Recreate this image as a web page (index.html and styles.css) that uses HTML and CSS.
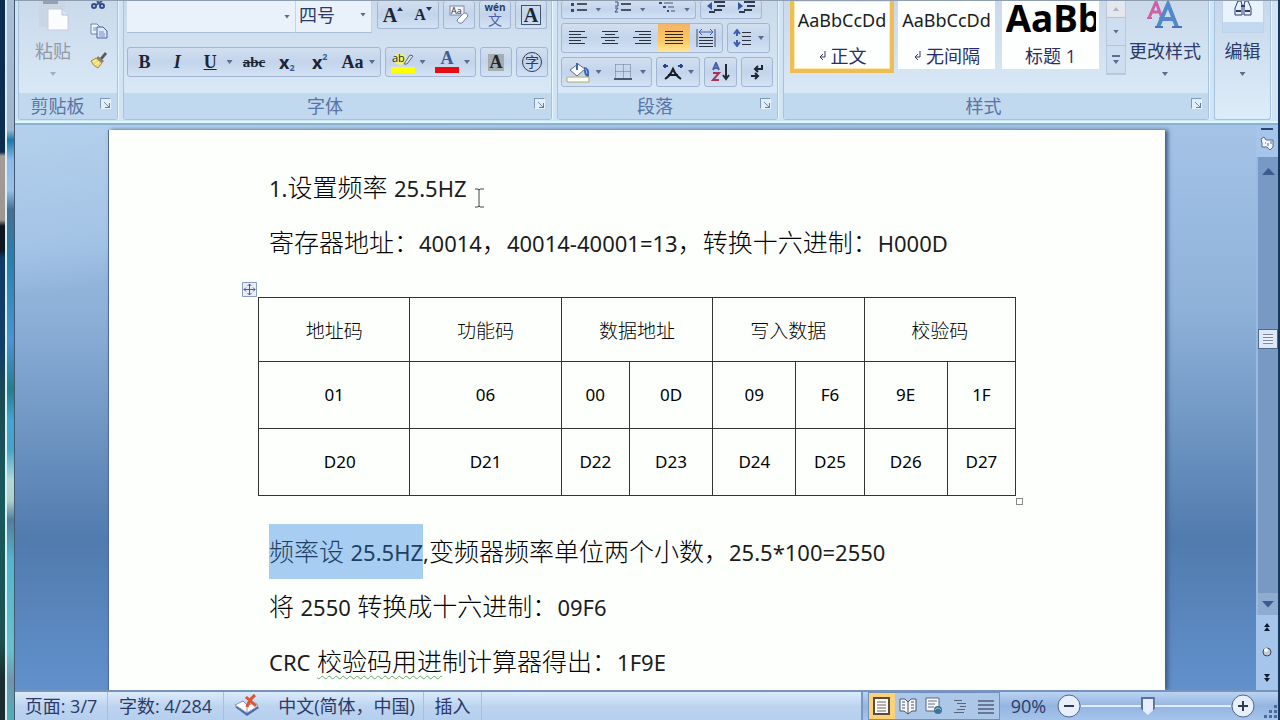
FILE: index.html
```html
<!DOCTYPE html>
<html lang="zh-CN">
<head>
<meta charset="utf-8">
<title>文档编辑</title>
<link rel="stylesheet" href="styles.css">
</head>
<body>
<div class="desktop-edge"></div>
<div class="window">
  <header class="ribbon">
    <section class="group clipboard">
      <div class="group-body clip-body">
        <button class="big paste" disabled>
          <svg class="paste-icon" width="32" height="30" viewBox="0 0 32 30"><path d="M2 0h26v26H2z" fill="#cbd6e5"/><path d="M6 0h15v3H6z" fill="#9a9fae"/><path d="M11 8h14l6 6v15H11z" fill="#fbfcfe" stroke="#c5cddb"/><path d="M25 8v6h6" fill="#dfe6f1" stroke="#b9c3d3"/></svg>
          <span>粘贴</span><i class="caret pale"></i>
        </button>
        <div class="clip-tools">
          <button class="tool cut" aria-label="剪切"><svg width="18" height="10" viewBox="0 0 18 10"><path d="M6 4l6-4M7 0l4 4" stroke="#405a96" stroke-width="2"/><circle cx="4" cy="5" r="2" fill="none" stroke="#354b8a" stroke-width="2"/><circle cx="12" cy="5" r="2" fill="none" stroke="#354b8a" stroke-width="2"/></svg></button>
          <button class="tool" aria-label="复制"><svg width="18" height="16" viewBox="0 0 18 16"><path d="M1 1h6l3 3v7H1z" fill="#eef4fd" stroke="#6c83b4"/><path d="M7 4h6l4 4v7H7z" fill="#dce8fa" stroke="#46609c"/><path d="M9 9h5M9 11h6M9 13h6M3 5h4M3 7h3" stroke="#7590c4"/></svg></button>
          <button class="tool" aria-label="格式刷"><svg width="18" height="18" viewBox="0 0 18 18"><path d="M10 7l5-6 2 2-5 6z" fill="#5b5568"/><path d="M8 5l6 5-2 2-6-4z" fill="#8c7f6a"/><path d="M6 7l6 5-4 5Q3 15 1 10z" fill="#f3dd72" stroke="#a08c48"/><path d="M3 11l3-2M5 14l4-3" stroke="#fff6bd"/></svg></button>
        </div>
      </div>
      <footer class="group-title"><span>剪贴板</span><button class="launcher" aria-label="剪贴板选项"></button></footer>
    </section>

    <section class="group font">
      <div class="group-body rows">
        <div class="row row-top">
          <div class="combo combo-font"><i class="caret"></i></div>
          <div class="combo combo-size"><span>四号</span><i class="caret"></i></div>
          <div class="bar bar-grow">
            <button class="serif grow" aria-label="增大字体">A<svg width="6" height="4" viewBox="0 0 6 4"><path d="M0 4l3-4 3 4z" fill="#26335c"/></svg></button>
            <button class="serif shrink" aria-label="缩小字体">A<svg width="6" height="4" viewBox="0 0 6 4"><path d="M0 0h6L3 4z" fill="#26335c"/></svg></button>
          </div>
          <div class="bar sq"><button aria-label="清除格式"><svg width="20" height="22" viewBox="0 0 20 22"><rect x="1" y="2" width="14" height="9" fill="#f2f6fc" stroke="#7d88a0"/><text x="2" y="10" font-size="9" class="svg-sans">Aa</text><path d="M8 16l7-7q3-1 4 3l-6 7q-4 1-5-3z" fill="#fff" stroke="#6e7ca3"/></svg></button></div>
          <div class="bar sq"><button class="pinyin" aria-label="拼音指南"><small>wén</small><b>文</b></button></div>
          <div class="bar sq"><button class="serif boxed">A</button></div>
        </div>
        <div class="row row-low">
          <div class="bar bar-style">
            <button class="serif w31">B</button><button class="serif w31 italic">I</button><button class="serif w31 under">U</button><i class="caret"></i>
            <button class="serif w31 strike">abc</button><button class="w31 sub">x<small>2</small></button><button class="w31 sup">x<small>2</small></button><button class="serif w31 case">Aa</button><i class="caret"></i>
          </div>
          <div class="bar bar-color">
            <button class="w31" aria-label="突出显示"><svg width="24" height="24" viewBox="0 0 24 24"><circle cx="9" cy="9" r="6" fill="#f3f06d"/><text x="1" y="12" font-size="11" class="svg-sans">ab</text><path d="M13 14l6-9 3 1-6 8z" fill="#dce4ef" stroke="#566580"/><path d="M0 17h24v6H0z" fill="#ffff00"/></svg></button><i class="caret"></i>
            <button class="w31" aria-label="字体颜色"><svg width="24" height="24" viewBox="0 0 24 24"><text x="12" y="14" font-size="18" font-weight="700" text-anchor="middle" class="svg-serif">A</text><path d="M0 17h24v6H0z" fill="#e80c12"/></svg></button><i class="caret"></i>
          </div>
          <div class="bar sq"><button class="serif shade">A</button></div>
          <div class="bar sq"><button class="circled">字</button></div>
        </div>
      </div>
      <footer class="group-title"><span>字体</span><button class="launcher" aria-label="字体选项"></button></footer>
    </section>

    <section class="group para">
      <div class="group-body para-rows">
        <div class="row cut-row">
          <div class="bar bar-lists">
            <button aria-label="项目符号"><svg width="18" height="14" viewBox="0 0 18 14"><path d="M1 3h3v3H1zM1 9h3v3H1z" fill="#3a4668"/><path d="M7 4h10M7 10h10" stroke="#4a5368" stroke-width="2"/></svg></button><i class="caret"></i>
            <button aria-label="编号"><svg width="18" height="14" viewBox="0 0 18 14"><path d="M1 2h3v4H1M1 8h3l-3 4h3" stroke="#3a4a80" fill="none"/><path d="M7 4h10M7 10h10" stroke="#4a5368" stroke-width="2"/></svg></button><i class="caret"></i>
            <button aria-label="多级列表"><svg width="18" height="14" viewBox="0 0 18 14"><path d="M1 3h3M5 7h3M9 11h2" stroke="#3a4a80" fill="none" stroke-width="2"/><path d="M6 3h9M10 7h6M13 11h4" stroke="#4a5368"/></svg></button><i class="caret"></i>
          </div>
          <div class="bar bar-indent">
            <button aria-label="减少缩进"><svg width="20" height="14" viewBox="0 0 20 14"><path d="M8 2h11M11 6h8M8 10h8M3 12h6" stroke="#333b50" stroke-width="2"/><path d="M6 2v8L1 6z" fill="#30549e"/></svg></button>
            <button aria-label="增加缩进"><svg width="20" height="14" viewBox="0 0 20 14"><path d="M8 2h11M11 6h8M8 10h8M3 12h6" stroke="#333b50" stroke-width="2"/><path d="M2 2v8l5-4z" fill="#30549e"/></svg></button>
          </div>
        </div>
        <div class="row">
          <div class="bar bar-align">
            <button aria-label="左对齐"><svg width="18" height="14" viewBox="0 0 18 14"><path d="M0 .5h16M0 3.500h12M0 6.500h18M0 9.500h12M0 12.500h16" stroke="#2c3240"/></svg></button>
            <button aria-label="居中"><svg width="18" height="14" viewBox="0 0 18 14"><path d="M1 .5h16M4 3.500h10M0 6.500h18M4 9.500h10M1 12.500h16" stroke="#2c3240"/></svg></button>
            <button aria-label="右对齐"><svg width="18" height="14" viewBox="0 0 18 14"><path d="M2 .5h16M6 3.500h12M0 6.500h18M6 9.500h12M2 12.500h16" stroke="#2c3240"/></svg></button>
            <button class="active" aria-label="两端对齐"><svg width="18" height="14" viewBox="0 0 18 14"><path d="M0 .5h18M0 3.500h18M0 6.500h18M0 9.500h18M0 12.500h18" stroke="#33291b"/></svg></button>
            <button aria-label="分散对齐"><svg width="20" height="18" viewBox="0 0 20 18"><path d="M1 0v18M19 0v18" stroke="#444e66"/><path d="M3 3h14M6 0L3 3l3 3M14 0l3 3-3 3" stroke="#4161b0" fill="none"/><path d="M3 8.500h14M3 11.500h14M3 14.500h14M3 17.500h14" stroke="#2c3240"/></svg></button>
          </div>
          <div class="bar bar-spacing"><button aria-label="行距"><svg width="20" height="18" viewBox="0 0 20 18"><path d="M4 2v5M1 5l3-4 3 4M4 11v5M1 13l3 4 3-4" stroke="#3e5fae" stroke-width="2" fill="none"/><path d="M9 3.500h9M9 7.500h9M9 11.500h9M9 15.500h9" stroke="#2c3240"/></svg></button><i class="caret"></i></div>
        </div>
        <div class="row">
          <div class="bar bar-fill">
            <button aria-label="底纹"><svg width="25" height="22" viewBox="0 0 25 22"><path d="M4 9l8-6 7 5-8 7z" fill="#fff" stroke="#5a6786"/><path d="M11 2v7M18 7q5 0 4 8-3-1-3-6" stroke="#3e65ae" stroke-width="2" fill="none"/><path d="M1 16h22v5H1z" fill="#fff" stroke="#b0ae68"/></svg></button><i class="caret"></i>
            <button aria-label="边框"><svg width="18" height="18" viewBox="0 0 18 18"><path d="M1.500 1.500h15v14M1.500 1.500v14M9.500 1.500v14M1.500 8.500h15" stroke="#68748c" stroke-dasharray="1 1" fill="none"/><path d="M0 16h18" stroke="#4a5870" stroke-width="2"/></svg></button><i class="caret"></i>
          </div>
          <div class="bar bar-scale"><button aria-label="中文版式"><svg width="22" height="18" viewBox="0 0 22 18"><path d="M3 16q5-3 8-10 3 7 8 10M6 12h10" stroke="#171b26" stroke-width="2" fill="none"/><path d="M1 3h5M3 1v4M16 3h5M19 1v4" stroke="#28448e" stroke-width="2"/></svg></button><i class="caret"></i></div>
          <div class="bar bar-sort"><button aria-label="排序"><svg width="20" height="20" viewBox="0 0 20 20"><path d="M2 8l3-7 3 7M3 6h4" stroke="#4563a8" stroke-width="2" fill="none"/><path d="M2 11h6l-6 7h6" stroke="#a53558" stroke-width="2" fill="none"/><path d="M15 2v15M12 13l3 4 3-4" stroke="#222838" fill="none" stroke-width="2"/></svg></button></div>
          <div class="bar bar-mark"><button aria-label="显示编辑标记"><svg width="14" height="16" viewBox="0 0 14 16"><path d="M12 1v4H5M8 2L5 5l3 3M1 12h7M5 9l3 3-3 3" stroke="#1d2537" stroke-width="2" fill="none"/></svg></button></div>
        </div>
      </div>
      <footer class="group-title"><span>段落</span><button class="launcher" aria-label="段落选项"></button></footer>
    </section>

    <section class="group styles">
      <div class="group-body styles-body">
        <button class="style selected"><span class="sample">AaBbCcDd</span><span class="style-name"><svg width="9" height="10" viewBox="0 0 9 10"><path d="M7 0v6H2M5 3L2 6l3 3" fill="none" stroke="#343c58"/></svg>正文</span></button>
        <button class="style"><span class="sample">AaBbCcDd</span><span class="style-name"><svg width="9" height="10" viewBox="0 0 9 10"><path d="M7 0v6H2M5 3L2 6l3 3" fill="none" stroke="#343c58"/></svg>无间隔</span></button>
        <button class="style"><span class="sample heading">AaBb</span><span class="style-name">标题 1</span></button>
        <div class="gallery-scroll"><button class="off" aria-label="上一行"><i class="caret up"></i></button><button aria-label="下一行"><i class="caret"></i></button><button class="more" aria-label="更多样式"><i class="caret"></i></button></div>
        <button class="big change"><svg width="36" height="30" viewBox="0 0 36 30"><g fill="none"><path d="M2 17L9 1l6 16M5 11h8" stroke="#cb62a8" stroke-width="3"/><path d="M0 17h5M12 17h5" stroke="#cb62a8" stroke-width="2"/><path d="M11 26L21 3l9 23M15 18h12" stroke="#5289cb" stroke-width="4"/><path d="M8 26h8M25 26h10" stroke="#4777b8" stroke-width="2"/></g></svg><span>更改样式</span><i class="caret"></i></button>
      </div>
      <footer class="group-title"><span>样式</span><button class="launcher" aria-label="样式选项"></button></footer>
    </section>

    <section class="group edit">
      <button class="big find"><span class="find-tile"><svg width="18" height="16" viewBox="0 0 18 16"><path d="M4 0h3l1 4v10H1V7zM14 0h-3l-1 4v10h7V7z" fill="#e9effa" stroke="#2f3d6c"/><path d="M2 10h5M11 10h5M7 5h4" stroke="#2f3d6c" stroke-width="2"/></svg></span><span>编辑</span><i class="caret"></i></button>
    </section>
  </header>

  <main class="workspace">
    <div class="canvas">
      <article class="page">
        <p>
          <span class="lat">1.</span>设置频率 <span class="lat">25.5HZ</span><svg class="ibeam" width="9" height="20" viewBox="0 0 9 20"><path d="M0 1h3l1 1 1-1h4M4 2v16M0 19h3l1-1 1 1h4" fill="none" stroke="#444"/></svg>
        </p>
        <p>寄存器地址：<span class="lat">40014</span>，<span class="lat">40014-40001=13</span>，转换十六进制：<span class="lat">H000D</span></p>
        <div class="table-wrap">
          <svg class="move" width="15" height="15" viewBox="0 0 15 15"><path d="M0 0h15v15H0z" fill="#e9f0fb"/><path d="M.5.5h14v14H.5z" fill="none" stroke="#8b9cbd"/><path d="M7.500 2v11M2 7.500h11M5.500 4l2-2 2 2M5.500 11l2 2 2-2M4 5.500l-2 2 2 2M11 5.500l2 2-2 2" fill="none" stroke="#3f5c98"/></svg>
          <table>
            <colgroup><col class="c1"><col class="c1"><col class="c2"><col class="c3"><col class="c3"><col class="c2"><col class="c3"><col class="c2"></colgroup>
            <tr class="head"><td>地址码</td><td>功能码</td><td colspan="2">数据地址</td><td colspan="2">写入数据</td><td colspan="2">校验码</td></tr>
            <tr><td>01</td><td>06</td><td>00</td><td>0D</td><td>09</td><td>F6</td><td>9E</td><td>1F</td></tr>
            <tr><td class="pad">D20</td><td>D21</td><td>D22</td><td>D23</td><td>D24</td><td>D25</td><td>D26</td><td>D27</td></tr>
          </table>
          <i class="resize"></i>
        </div>
        <p><span class="sel">频率设 <span class="lat">25.5HZ</span></span><span class="lat">,</span>变频器频率单位两个小数，<span class="lat">25.5*100=2550</span></p>
        <p>将 <span class="lat">2550</span> 转换成十六进制：<span class="lat">09F6</span></p>
        <p><span class="lat">CRC</span> <span class="wavy">校验码用进</span>制计算器得出：<span class="lat">1F9E</span></p>
      </article>
    </div>
    <aside class="scroll">
      <i class="split"></i>
      <button class="ruler" aria-label="标尺"><svg width="15" height="15" viewBox="0 0 15 15"><path d="M1 3l3-2 2 3h7v7l-3 3-3-3H2V7z" fill="#f4f7fd" stroke="#56698f"/><path d="M5 7h1M8 7v3M11 5v3" stroke="#56698f"/></svg></button>
      <div class="track"><button aria-label="向上滚动"><i class="arrow up"></i></button><div class="thumb"></div><button class="down" aria-label="向下滚动"><i class="arrow"></i></button></div>
      <div class="browse">
        <button aria-label="上一页"><svg width="8" height="8" viewBox="0 0 8 8"><path d="M4 0l3 4H1zM4 4l3 4H1z" fill="#10182c"/></svg></button>
        <button aria-label="选择浏览对象"><svg width="10" height="10" viewBox="0 0 10 10"><circle cx="5" cy="5" r="4" fill="#c4cbd5" stroke="#3f4858"/><circle cx="4" cy="3" r="2" fill="#f5f8fb"/></svg></button>
        <button aria-label="下一页"><svg width="8" height="8" viewBox="0 0 8 8"><path d="M1 0h6L4 4zM1 4h6L4 8z" fill="#10182c"/></svg></button>
      </div>
    </aside>
  </main>

  <footer class="status">
    <button class="st pages">页面: 3/7</button><button class="st words">字数: 4/284</button>
    <button class="st proof" aria-label="校对"><svg width="26" height="24" viewBox="0 0 26 24"><path d="M1 13l9-4 3 3 9-2 3 4-12 8z" fill="#4a6bab"/><path d="M1 11l8-4 4 4 9-2 2 3-11 7z" fill="#fff" stroke="#8995b4"/><path d="M13 11v8" stroke="#8995b4"/><path d="M12 3l10 9M21 1Q15 6 13 13" stroke="#e2532e" stroke-width="3" fill="none"/></svg></button>
    <button class="st lang">中文(简体，中国)</button><button class="st ins">插入</button>
    <div class="st-right">
      <div class="views">
        <button class="on" aria-label="页面视图"><svg width="18" height="18" viewBox="0 0 18 18"><path d="M1 1h15v16H1z" fill="#fff" stroke="#5f4c3c" stroke-width="2"/><path d="M4 5h9M4 8h9M4 11h9M4 14h9" stroke="#755f55"/></svg></button>
        <button aria-label="阅读版式"><svg width="18" height="18" viewBox="0 0 18 18"><path d="M1 2h5l3 3 3-3h5v12h-4l-4 3-4-3H1z" fill="#f5f7fb" stroke="#4b5568"/><path d="M9 5v12M3 5h3M3 8h3M3 11h3M12 5h3M12 8h3M12 11h3" stroke="#4b5568"/></svg></button>
        <button aria-label="Web 版式"><svg width="18" height="18" viewBox="0 0 18 18"><path d="M1 1h13v13H1z" fill="#f4f7fc" stroke="#58657c"/><path d="M3 4h9M3 7h7M3 10h6" stroke="#65718a"/><circle cx="13" cy="13" r="4" fill="#3d7399"/><path d="M10 13q3-4 6 0" stroke="#9cd0bd" fill="none"/></svg></button>
        <button aria-label="大纲视图"><svg width="16" height="16" viewBox="0 0 16 16"><path d="M2 2.500h8M5 5.500h9M8 8.500h6M5 11.500h8M2 14.500h10" stroke="#5b6577"/></svg></button>
        <button aria-label="普通视图"><svg width="16" height="16" viewBox="0 0 16 16"><path d="M0 3h16M0 7h16M0 11h16M0 15h16" stroke="#6b7891" stroke-width="2"/></svg></button>
      </div>
      <label class="pct" for="zoom">90%</label>
      <button class="round" aria-label="缩小"><svg width="24" height="24" viewBox="0 0 24 24"><circle cx="12" cy="12" r="11" fill="#e7effa" stroke="#52658a"/><path d="M7 12h10" stroke="#2f3b53" stroke-width="2"/></svg></button>
      <input type="range" id="zoom" min="0" max="100" value="44">
      <button class="round" aria-label="放大"><svg width="24" height="24" viewBox="0 0 24 24"><circle cx="12" cy="12" r="11" fill="#e7effa" stroke="#52658a"/><path d="M7 12h10M12 7v10" stroke="#2f3b53" stroke-width="2"/></svg></button>
      <svg class="grip" width="15" height="15" viewBox="0 0 15 15"><path d="M11 2h3v3h-3zM6 7h3v3H6zM11 7h3v3h-3zM1 12h3v3H1zM6 12h3v3H6zM11 12h3v3h-3z" fill="#486a9e"/></svg>
    </div>
  </footer>
</div>
</body>
</html>
```
FILE: styles.css
```css
* { box-sizing: border-box; }
body {
  margin: 0;
  height: 100vh;
  display: flex;
  overflow: hidden;
  background: #12395c;
  font: 18px/24px "Open Sans", "Noto Sans CJK SC", sans-serif;
  color: #2c3a68;
}
button {
  margin: 0;
  padding: 0;
  border: 0;
  background: none;
  font: inherit;
  color: inherit;
  display: flex;
  align-items: center;
  justify-content: center;
}
svg { flex: none; }
.desktop-edge {
  flex: 0 0 15px;
  border-right: 1px solid #43586f;
  background:
    linear-gradient(#0c2c50 0, #0c2c50 152px, #a59c98 156px, #9d958f 220px, #10161f 226px, #10161f 250px, #0f3a66 258px, #123f68 350px, #1b4a52 400px, #175a5c 500px, #1c5150 640px, #1a2c30 680px) 0 0 / 5px 100% no-repeat,
    linear-gradient(90deg, transparent 5px, #d4f0f6 5px 7px, transparent 7px),
    linear-gradient(#a9bfd6 0, #9fb5cc 130px, #1879a8 140px, #8eb9e8 160px, #9bc0e8 190px, #446e91 210px, #2581ae 260px, #4a94d5 340px, #267d8d 390px, #41a6ce 420px, #47a3cb 450px, #b2d9d8 480px, #b2d0cc 500px, #517d9d 520px, #53b5cc 560px, #68c1cd 650px, #7394aa 680px, #50aeb8 720px);
}
.window {
  flex: 1;
  min-width: 0;
  display: flex;
  flex-direction: column;
  border-right: 2px solid #16365c;
}

/* Ribbon */
.ribbon {
  flex: none;
  display: flex;
  gap: 5px;
  padding: 0 7px 3px 3px;
  background: #d1e4f5;
  border-top: 1px solid #8f9db0;
  border-bottom: 2px solid #8db0d3;
  box-shadow: inset 0 -2px #d8fafe;
}
.group {
  display: flex;
  flex-direction: column;
  border: 1px solid #a5c3dd;
  border-top: 0;
  border-radius: 0 0 3px 3px;
  box-shadow: 1px 0 #e9f6fd;
  background: linear-gradient(#cbdaeb, #d9e8f6 92px);
}
.clipboard { flex: 0 0 100px; }
.font { flex: 0 0 429px; }
.para { flex: 0 0 221px; }
.styles { flex: 1; }
.edit { flex: 0 0 57px; background: linear-gradient(#c8d8ec, #dcecf8); }
.group-body { height: 92px; overflow: hidden; }
.group-title {
  height: 26px;
  display: flex;
  align-items: center;
  background: #c1d9ef;
  color: #5874a6;
}
.group-title span { flex: 1; text-align: center; padding-right: 8px; }
.clipboard .group-title span { padding-right: 4px; }
.launcher {
  width: 11px;
  height: 11px;
  margin: 0 6px 6px 0;
  border: 1px solid #7f99bc;
  border-right-color: #e8f3fc;
  border-bottom-color: #e8f3fc;
  background:
    linear-gradient(#5f7ba6, #5f7ba6) 100% 100% / 5px 1px no-repeat,
    linear-gradient(#5f7ba6, #5f7ba6) 100% 100% / 1px 5px no-repeat,
    linear-gradient(45deg, transparent 46%, #7089ae 46% 56%, transparent 56%) 100% 100% / 6px 6px no-repeat,
    #e2eef9;
}
.caret {
  flex: none;
  width: 6px;
  height: 4px;
  background: #5b6c8c;
  clip-path: polygon(0 0, 100% 0, 50% 100%);
}
.caret.up { transform: rotate(180deg); }
.caret.pale { opacity: .45; }
.big { flex-direction: column; }
.clip-body { display: flex; }
.paste { width: 68px; justify-content: flex-start; color: #9299a5; }
.paste-icon { margin-bottom: 8px; }
.big .caret { margin-top: 9px; }
.clip-tools { flex: 1; display: flex; flex-direction: column; gap: 12px; align-items: flex-start; padding-left: 3px; }
.cut { height: 10px; }
.rows { display: flex; flex-direction: column; gap: 15px; }
.row { display: flex; }
.row-top { height: 31px; padding-left: 3px; }
.row-low { height: 30px; padding-left: 3px; gap: 4px; }
.row-top .combo { height: 32px; }
.row-top .bar { border-top: 0; height: 28px; }
.combo {
  display: flex;
  align-items: center;
  background: #e9f2fb;
  border-right: 1px solid #c6d3e3;
  border-bottom: 1px solid #a9bfd9;
}
.combo .caret { margin-left: auto; margin-right: 5px; }
.combo-font { width: 169px; }
.combo-size { width: 76px; padding: 0 0 4px 3px; }
.bar {
  display: flex;
  align-items: center;
  border: 1px solid #a2b5d2;
  border-radius: 3px;
  background: linear-gradient(#d2dff0, #c3d4eb 50%, #d3e2f4);
}
.bar button { flex: 1; height: 100%; }
.bar .caret { margin-right: 5px; }
.bar-grow { width: 62px; margin: 0 4px 0 5px; }
.sq { width: 32px; }
.row .sq + .sq { margin-left: 4px; }
.row-low .sq + .sq { margin-left: 0; }
.serif { font-family: "Liberation Serif", serif; font-weight: 700; color: #1d2535; }
.grow { font-size: 20px; }
.shrink { font-size: 16px; }
.grow svg, .shrink svg { margin-bottom: 12px; }
.svg-sans { font-family: "Open Sans", sans-serif; fill: #222b3c; }
.svg-serif { font-family: "Liberation Serif", serif; fill: #405b92; }
.row .pinyin { flex-direction: column; }
.pinyin small { font: bold 10px/10px "Open Sans", sans-serif; }
.pinyin b { font: 14px/15px "Noto Sans CJK SC", sans-serif; color: #4e5eaf; }
.row .boxed { flex: none; width: 20px; height: 20px; margin: auto; border: 1px solid #48536a; font-size: 20px; }
.bar-style { width: 254px; }
.bar-color { width: 91px; }
.italic { font-style: italic; }
.under { text-decoration: underline; }
.strike { font-size: 15px; text-decoration: line-through; }
.sub, .sup { font-weight: 700; color: #1d2535; }
.sub small, .sup small { font-size: 9px; line-height: 10px; color: #405b92; }
.sub small { padding-top: 11px; }
.sup small { padding-bottom: 11px; }
.row .shade { flex: none; width: 16px; height: 17px; margin: auto; background: #a5adaf; }
.row .circled { flex: none; width: 20px; height: 20px; margin: auto; border: 1px solid #303a50; border-radius: 50%; font-size: 14px; line-height: 16px; }
.para-rows { display: flex; flex-direction: column; gap: 4px; padding-left: 3px; }
.para-rows .row { height: 30px; gap: 4px; }
.para-rows .cut-row { height: 18px; }
.cut-row .bar { border-top: 0; }
.bar-lists { width: 135px; }
.bar-indent { width: 62px; }
.cut-row svg { margin-bottom: 5px; }
.bar-align { width: 162px; }
.bar-spacing { width: 43px; }
.active { background: linear-gradient(#f5b46a, #fbc95e 60%, #ffe79a); }
.bar-fill { width: 91px; }
.bar-scale { width: 44px; }
.bar-sort { width: 33px; }
.bar-mark { width: 32px; }
.styles-body { display: flex; padding-left: 6px; }
.style {
  flex: 0 0 97px;
  height: 68px;
  margin-right: 7px;
  flex-direction: column;
  justify-content: flex-start;
  background: #fdfefe;
  overflow: hidden;
}
.style.selected { flex-basis: 104px; height: 72px; margin-right: 4px; border: 4px solid #eebd55; border-top: 0; box-shadow: inset 0 0 0 1px #ffe9ab; }
.sample { height: 43px; font: 18px/39px "Noto Sans", sans-serif; color: #191d22; }
.sample.heading { width: 90px; font: bold 37px/33px "Noto Sans", sans-serif; color: #000; overflow: hidden; text-align: left; }
.style-name { display: flex; align-items: center; gap: 4px; color: #2a2e67; }
.gallery-scroll { width: 20px; height: 74px; display: flex; flex-direction: column; border: 1px solid #b9cade; border-top: 0; }
.gallery-scroll button { flex: 1; width: 18px; border-bottom: 1px solid #b1c5df; background: #cfddf0; }
.gallery-scroll button.off { flex: 0 0 17px; background: #e4e8ee; }
.gallery-scroll .off .caret { opacity: .4; }
.more { flex-direction: column; gap: 3px; }
.more::before { content: ""; width: 8px; height: 2px; background: #5b6c8c; }
.change { flex: 1; height: 78px; justify-content: flex-start; padding-right: 4px; }
.change svg { margin-bottom: 8px; }
.find { height: 78px; justify-content: flex-start; }
.find-tile { width: 42px; height: 32px; margin-bottom: 6px; display: flex; justify-content: center; background: linear-gradient(#e8f3fd 21px, #c3d9ef 21px); border: 1px solid #bfd2e8; border-top: 0; }

/* Document */
.workspace {
  flex: 1;
  min-height: 0;
  display: flex;
  background:
    linear-gradient(172deg, #b4d0ec 0, #a4c4e6 120px, transparent 170px),
    linear-gradient(#a4c3e6, #8fb2da 180px, #7399c5 290px, #517bae 415px, #6190cb 564px);
}
.canvas { flex: 1; min-width: 0; padding: 5px 91px 0 93px; overflow: hidden; }
.page {
  position: relative;
  height: 100%;
  padding: 30px 150px 0 160px;
  background: #fdfffd;
  border-left: 1px solid #536b8b;
  box-shadow: 3px 0 4px #3f5f86;
  color: #000;
  font: 300 25px/55px "Noto Sans", "Noto Sans CJK SC", sans-serif;
  white-space: nowrap;
}
p { margin: 0; height: 55px; }
.lat { font-size: 22px; font-weight: 400; color: #1c1c1c; }
.sel .lat { color: inherit; }
.ibeam { position: absolute; left: 366px; top: 58px; }
.table-wrap { position: relative; width: 758px; margin: 27px 0 28px -11px; }
table { width: 100%; border-collapse: collapse; table-layout: fixed; }
td {
  height: 67px;
  padding: 0;
  border: 1px solid #333;
  text-align: center;
  font: 17px/24px "Noto Sans", sans-serif;
}
.head td { height: 64px; font: 300 19px/24px "Noto Sans CJK SC", sans-serif; }
td.pad { padding-left: 11px; }
.c1 { width: 20%; }
.c2 { width: 9%; }
.c3 { width: 11%; }
.move { position: absolute; left: -16px; top: -15px; }
.resize { position: absolute; right: -7px; bottom: -9px; width: 7px; height: 7px; border: 1px solid #888; background: #fff; }
.sel { display: inline-block; height: 55px; background: #a7cdf0; color: #203f66; }
.wavy { text-decoration: underline wavy #68a867 1px; text-underline-offset: 4px; }

/* Scroll bar */
.scroll { flex: 0 0 21px; display: flex; flex-direction: column; align-items: center; background: #a6c5eb; }
.split { width: 12px; height: 2px; margin-top: 3px; background: #24466f; }
.ruler { height: 27px; }
.track { flex: 1; width: 100%; display: flex; flex-direction: column; align-items: center; background: #7899c3; border-left: 2px solid #98b9e2; }
.track button { height: 28px; width: 100%; }
.arrow { width: 13px; height: 7px; background: #3b5c90; clip-path: polygon(0 0, 100% 0, 50% 100%); }
.arrow.up { transform: rotate(180deg); }
.thumb { width: 20px; height: 20px; margin-top: 144px; border: 1px solid #53688a; background: repeating-linear-gradient(#788aa0 0 1px, #eaf1fa 1px 3px) center / 10px 10px no-repeat, #dce8f6; }
.track .down { margin-top: auto; height: 22px; background: #8eabd0; }
.browse { height: 75px; display: flex; flex-direction: column; justify-content: space-around; }

/* Status bar */
.status {
  flex: 0 0 30px;
  display: flex;
  align-items: center;
  border-top: 2px solid #7795bb;
  background: linear-gradient(#dcebfb, #bdd4f0 50%, #b5cfee);
  white-space: nowrap;
}
.st { height: 28px; border-right: 1px solid #a5bfdf; }
.pages { width: 93px; }
.words { width: 116px; }
.proof { width: 46px; border: 0; }
.lang { width: 154px; }
.ins { width: 58px; }
.st-right { margin-left: auto; height: 28px; display: flex; align-items: center; border-left: 2px solid #7898c3; padding-left: 5px; background: linear-gradient(#bad3f3, #94b5e1 50%, #a5c4ec); }
.views { display: flex; height: 28px; border: 1px solid #7290bd; background: #adc7e8; }
.views button { width: 26px; }
.views .on { background: #fbd278; }
.pct { width: 57px; text-align: center; }
.round { width: 24px; }
input[type="range"] {
  appearance: none;
  width: 150px;
  height: 24px;
  margin: 0;
  background: linear-gradient(#e1edfb, #e1edfb) center / 100% 2px no-repeat;
}
input[type="range"]::-webkit-slider-thumb {
  appearance: none;
  width: 14px;
  height: 18px;
  background: linear-gradient(90deg, #58709a 2px, #e5eefa 2px 12px, #58709a 12px);
  border-top: 2px solid #58709a;
  clip-path: polygon(0 0, 100% 0, 100% 65%, 50% 100%, 0 65%);
}
.grip { margin: 8px 0 0 8px; }
```
